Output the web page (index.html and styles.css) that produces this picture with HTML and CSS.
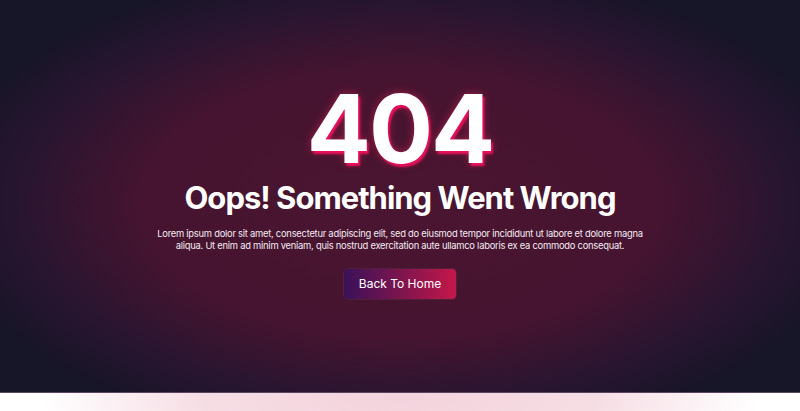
FILE: index.html
```html
<!DOCTYPE html>
<html lang="en">
<head>
  <meta charset="UTF-8" />
  <meta name="viewport" content="width=device-width, initial-scale=1" />
  <title>404 - Page Not Found</title>
  <link rel="stylesheet" href="styles.css">
</head>
<body>
  <section class="error-page">
    <div class="error-content">
      <h1 class="error-code">404</h1>
      <h2 class="error-title">Oops! Something Went Wrong</h2>
      <p class="error-text">Lorem ipsum dolor sit amet, consectetur adipiscing elit, sed do eiusmod tempor incididunt ut labore et dolore magna aliqua. Ut enim ad minim veniam, quis nostrud exercitation aute ullamco laboris ex ea commodo consequat.</p>
      <a href="#" class="btn-home">Back To Home</a>
    </div>
  </section>
  <section class="next-section"></section>
</body>
</html>
```

FILE: styles.css
```css
body {
  margin: 0;
  font-family: "Inter", "DejaVu Sans", sans-serif;
  background: #fff;
}
.error-page {
  height: 393px;
  display: flex;
  align-items: center;
  justify-content: center;
  background: radial-gradient(ellipse 58% 62% at 50% 52%, #4a1530 0%, #461430 55%, #2a1530 80%, #171528 100%);
  border-bottom: 1px solid #5a4660;
  box-sizing: border-box;
}
.error-content {
  text-align: center;
  color: #fff;
  width: 500px;
  margin-top: -12px;
}
.error-code {
  margin: 0;
  font-size: 95px;
  font-weight: 700;
  line-height: 1;
  letter-spacing: -2px;
  text-shadow: 2px 3px 2px #e8105a, 0 0 8px rgba(255, 40, 100, 0.5);
}
.error-title {
  margin: 3px 0 0;
  font-size: 31px;
  font-weight: 700;
  line-height: 1.2;
  letter-spacing: -1px;
}
.error-text {
  margin: 11px 0 0;
  font-size: 9.4px;
  line-height: 12px;
  letter-spacing: -0.25px;
  color: #f4eaf0;
}
.btn-home {
  display: inline-block;
  margin-top: 17px;
  width: 112px;
  padding: 7px 0;
  font-size: 12px;
  line-height: 16px;
  color: #fff;
  text-decoration: none;
  border-radius: 4px;
  background: linear-gradient(90deg, #3a1158 0%, #7c154e 50%, #c4174a 100%);
  box-shadow: 0 0 0 1px rgba(255, 255, 255, 0.05);
}
.next-section {
  height: 18px;
  background: radial-gradient(ellipse 45% 600% at 50% 0%, #f3d2dc 0%, #f6dde4 55%, #ffffff 100%);
}
```
